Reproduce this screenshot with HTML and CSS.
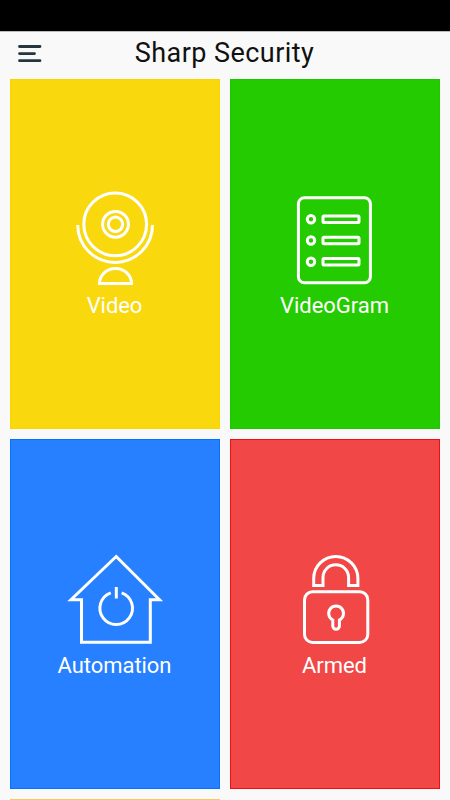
FILE: index.html
```
<!DOCTYPE html>
<html>
	<head>
		<meta charset="UTF-8">
		<title>Sharp Security</title>
		<link rel="stylesheet" href="styles.css">
	</head>
	<body>
		<div id="statusBar"></div>
		<header id="header">
			<svg class="menu" viewBox="0 0 24 20">
				<path d="M1.5 2.5H22M1.5 9.6H16.5M1.5 16.7H22"/>
			</svg>
			<h1>Sharp Security</h1>
		</header>
		<ul id="tiles">
			<li class="video">
				<svg viewBox="60 185 110 105">
					<circle cx="115.2" cy="224.3" r="31.4"/>
					<circle cx="115.5" cy="224.3" r="12.9"/>
					<circle cx="115.5" cy="224.3" r="7.2"/>
					<path d="M77.7 225a37.4 37.4 0 0 0 74.8 0"/>
					<path d="M99.5 283.5a16 15 0 0 1 32 0z"/>
				</svg>
				<span>Video</span>
			</li>
			<li class="gram">
				<svg viewBox="280 185 110 105">
					<rect x="298.4" y="197.8" width="72" height="85" rx="6"/>
					<circle cx="311" cy="219.3" r="3.7"/>
					<circle cx="311" cy="240.5" r="3.7"/>
					<circle cx="311" cy="261.7" r="3.7"/>
					<rect x="323" y="216" width="36" height="6.6" rx="1"/>
					<rect x="323" y="237.2" width="36" height="6.6" rx="1"/>
					<rect x="323" y="258.4" width="36" height="6.6" rx="1"/>
				</svg>
				<span>VideoGram</span>
			</li>
			<li class="auto">
				<svg viewBox="60 545 110 105">
					<path d="M116.2 556.5L159.5 599.7H150.3V642.3H81.5V599.7H71z"/>
					<path d="M110.8 592.8a16.3 16.3 0 1 0 10.8 0"/>
					<path d="M116.3 587V598.5"/>
				</svg>
				<span>Automation</span>
			</li>
			<li class="armed">
				<svg viewBox="280 545 110 105">
					<rect x="304.5" y="591.8" width="63.3" height="50.6" rx="8"/>
					<path d="M313.7 585.5V578.5a22.1 22.1 0 0 1 44.2 0V585.5H348.6V577.5a12.8 12.8 0 0 0 -25.6 0V585.5z"/>
					<path d="M332.8 620a7.4 7.4 0 1 1 6.6 0V626a3.3 3.3 0 0 1 -6.6 0z"/>
				</svg>
				<span>Armed</span>
			</li>
			<li class="next"></li>
		</ul>
	</body>
</html>
```
FILE: styles.css
```
html,body{
	height: 100%;
	margin: 0;
}
body{
	display: flex;
	flex-direction: column;
	overflow: hidden;
	background: #f9f9f9;
	font-family: Roboto, "Liberation Sans", sans-serif;
}
#statusBar{
	flex: none;
	height: 31px;
	background: #000;
}
#header{
	flex: none;
	height: 48px;
	box-sizing: border-box;
	border-top: 1px solid #bbb;
	padding: 0 19px 0 18px;
	display: grid;
	grid-template-columns: 24px 1fr 24px;
	align-items: center;
}
#header .menu{
	width: 24px;
	height: 20px;
	margin-top: -3px;
	fill: none;
	stroke: #263640;
	stroke-width: 2.8;
	stroke-linecap: round;
}
#header h1{
	margin: 0;
	padding-bottom: 5px;
	font-size: 27px;
	line-height: 32px;
	font-weight: 400;
	letter-spacing: 0.45px;
	text-align: center;
	color: #111;
}
#tiles{
	flex: 1;
	min-height: 0;
	overflow: hidden;
	margin: 0;
	padding: 0 10px;
	list-style: none;
	display: grid;
	grid-template-columns: 210px 210px;
	grid-template-rows: 350px 350px 1px;
	gap: 10px;
}
#tiles li{
	box-sizing: border-box;
	border: 1px solid;
	padding-top: 105px;
	display: flex;
	flex-direction: column;
	align-items: center;
}
#tiles svg{
	width: 110px;
	height: 105px;
	fill: none;
	stroke: #fff;
	stroke-width: 3;
}
#tiles span{
	margin: 3px 1px 0 0;
	font-size: 22px;
	line-height: 26px;
	letter-spacing: -0.05px;
	color: #fff;
}
#tiles .video{
	background: #f9d90d;
	border-color: #f9d500;
}
#tiles .gram{
	background: #24cb00;
	border-color: #1cc800;
}
#tiles .auto{
	background: #2680ff;
	border-color: #0073ff;
}
#tiles .armed{
	background: #f24747;
	border-color: #ee0e14;
}
#tiles .next{
	height: 1px;
	padding: 0;
	border: 0;
	background: #fcc860;
}
```
